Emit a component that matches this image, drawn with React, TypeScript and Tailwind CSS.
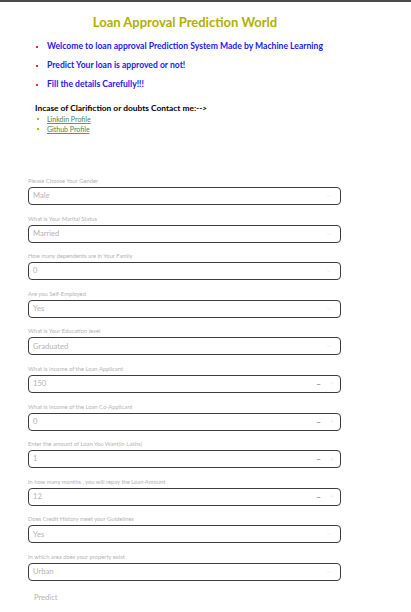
import React from "react";

const fields = [
  { label: "Please Choose Your Gender", value: "Male", kind: "select" },
  { label: "What is Your Marital Status", value: "Married", kind: "select" },
  { label: "How many dependents are in Your Family", value: "0", kind: "select" },
  { label: "Are you Self-Employed", value: "Yes", kind: "select" },
  { label: "What is Your Education level", value: "Graduated", kind: "select" },
  { label: "What is income of the Loan Applicant", value: "150", kind: "number" },
  { label: "What is income of the Loan Co-Applicant", value: "0", kind: "number" },
  { label: "Enter the amount of Loan You Want(in Lakhs)", value: "1", kind: "number" },
  { label: "In how many months , you will repay the Loan Amount", value: "12", kind: "number" },
  { label: "Does Credit History meet your Guidelines", value: "Yes", kind: "select" },
  { label: "In which area does your property exist", value: "Urban", kind: "select" },
];

function Field({ label, value, kind }: { label: string; value: string; kind: string }) {
  return (
    <div className="flex flex-col mb-[8.6px]">
      <div className="h-[10px] leading-[10px] text-[5.8px] text-[#b4b4b4] mb-[1px]">{label}</div>
      <div className="h-[18px] w-[313px] border-[1.5px] border-[#3c3c3c] rounded-[4px] flex items-center pl-[4px] pr-[6px]">
        <span className="flex-1 text-[7.6px] text-[#b4b4b4]">{value}</span>
        {kind === "number" ? (
          <div className="flex items-center gap-[9px]">
            <span className="text-[8px] text-[#666] leading-none">−</span>
            <span className="text-[7px] text-[#ececec] leading-none">+</span>
          </div>
        ) : (
          <svg width="6" height="4" viewBox="0 0 6 4" className="mr-[2px]">
            <path d="M1 1 L3 3 L5 1" fill="none" stroke="#ededed" strokeWidth="0.7" />
          </svg>
        )}
      </div>
    </div>
  );
}

export default function App() {
  return (
    <div className="w-[411px] h-[612px] overflow-hidden bg-white border-t-2 border-[#4a4a4a]" style={{ fontFamily: "Lato, sans-serif" }}>
      {/* Header */}
      <div className="w-[370px] text-center pt-[11px] h-[29px] leading-[18px] text-[13px] font-bold text-[#b0b000]">
        Loan Approval Prediction World
      </div>

      <ul className="pl-[36px] pt-[6px]">
        {[
          "Welcome to loan approval Prediction System Made by Machine Learning",
          "Predict Your loan is approved or not!",
          "Fill the details Carefully!!!",
        ].map((t) => (
          <li key={t} className="flex items-center h-[19px]">
            <span className="w-[2px] h-[2px] bg-[#ff2020] mr-[9px]" />
            <span className="text-[8.6px] font-bold text-[#2020f0]">{t}</span>
          </li>
        ))}
      </ul>

      <div className="pl-[35px] pt-[8px] text-[8.4px] font-bold text-black leading-[12px]">
        Incase of Clarifiction or doubts Contact me:--&gt;
      </div>
      <ul className="pl-[37px]">
        {["Linkdin Profile", "Github Profile"].map((t) => (
          <li key={t} className="flex items-center h-[10px]">
            <span className="w-[2px] h-[2px] bg-[#c8b400] mr-[8px]" />
            <span className="text-[7px] text-[#3a8a5a] underline decoration-[#3aaa70]">{t}</span>
          </li>
        ))}
      </ul>

      {/* Form */}
      <div className="pl-[28px] pt-[42px]">
        {fields.map((f) => (
          <Field key={f.label} {...f} />
        ))}
        <div className="pl-[6px] pt-[2px] text-[7.6px] text-[#b4b4b4]">Predict</div>
      </div>
    </div>
  );
}
